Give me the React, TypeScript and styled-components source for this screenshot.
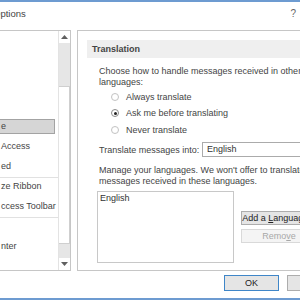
import { FC } from "react";
import styled, { createGlobalStyle } from "styled-components";

const GlobalStyle = createGlobalStyle`
    html, body {
        margin: 0;
        padding: 0;
        background: #ffffff;
        overflow: hidden;
    }
    body {
        font-family: "Liberation Sans", Arial, sans-serif;
        font-size: 9px;
        color: #444444;
    }
`;

// the list is scrolled, so only the tail of each label is in view
const navItems: { text: string; selected?: boolean; divider?: boolean }[] = [
    { text: "" },
    { text: "" },
    { text: "" },
    { text: "" },
    { text: "" },
    { text: "" },
    { text: "e", selected: true },
    { text: "Access" },
    { text: "ed", divider: true },
    { text: "ze Ribbon" },
    { text: "ccess Toolbar", divider: true },
    { text: "" },
    { text: "nter" },
];

const radios = [
    { label: "Always translate", checked: false },
    { label: "Ask me before translating", checked: true },
    { label: "Never translate", checked: false },
];

export const App: FC = () => {
    return (
        <Window>
            <GlobalStyle />
            <AccentLine />
            <TitleRow>
                <Title>Options</Title>
                <Help>?</Help>
            </TitleRow>

            <Body>
                <NavList>
                    <NavItems>
                        {navItems.map((item, i) => (
                            <NavRow key={i} $divider={item.divider}>
                                <NavLabel $selected={item.selected}>{item.text}</NavLabel>
                            </NavRow>
                        ))}
                    </NavItems>
                    <ScrollBar>
                        <ScrollArrow>
                            <svg width="7" height="4" viewBox="0 0 7 4">
                                <path d="M0 4 L3.5 0 L7 4 Z" fill="#606060" />
                            </svg>
                        </ScrollArrow>
                        <ScrollTrack>
                            <ScrollThumb />
                        </ScrollTrack>
                        <ScrollArrow>
                            <svg width="7" height="4" viewBox="0 0 7 4">
                                <path d="M0 0 L3.5 4 L7 0 Z" fill="#606060" />
                            </svg>
                        </ScrollArrow>
                    </ScrollBar>
                </NavList>

                <Panel>
                    <SectionHeader>Translation</SectionHeader>
                    <SectionBody>
                        <Paragraph>
                            Choose how to handle messages received in other languages:
                        </Paragraph>
                        <RadioGroup>
                            {radios.map((r) => (
                                <RadioRow key={r.label}>
                                    <RadioCircle $checked={r.checked} />
                                    <span>{r.label}</span>
                                </RadioRow>
                            ))}
                        </RadioGroup>
                        <SelectRow>
                            <SelectLabel>Translate messages into:</SelectLabel>
                            <Select>English</Select>
                        </SelectRow>
                        <Paragraph $gap={8}>
                            Manage your languages. We won't offer to translate messages
                            received in these languages.
                        </Paragraph>
                        <LanguagesRow>
                            <LanguageList>
                                <div>English</div>
                            </LanguageList>
                            <ButtonColumn>
                                <SideButton>
                                    Add a <u>L</u>anguage...
                                </SideButton>
                                <SideButton disabled>
                                    Remo<u>v</u>e
                                </SideButton>
                            </ButtonColumn>
                        </LanguagesRow>
                    </SectionBody>
                </Panel>
            </Body>

            <Footer>
                <DialogButton $primary>OK</DialogButton>
                <DialogButton>Cancel</DialogButton>
            </Footer>
            <AccentLine />
        </Window>
    );
};

export default App;

const Window = styled.div`
    width: 300px;
    height: 300px;
    overflow: hidden;
    display: flex;
    flex-direction: column;
    background: #ffffff;
`;

const AccentLine = styled.div`
    height: 2px;
    flex-shrink: 0;
    background: #6d9bd1;
`;

const TitleRow = styled.div`
    height: 22px;
    display: flex;
    align-items: center;
    justify-content: space-between;
    padding-right: 4px;
`;

const Title = styled.div`
    margin-left: -7px;
    font-size: 9.5px;
    color: #444444;
`;

const Help = styled.div`
    font-size: 10px;
    color: #666666;
`;

const Body = styled.div`
    margin-top: 6px;
    height: 241px;
    display: flex;
    gap: 6px;
`;

const NavList = styled.div`
    width: 72px;
    margin-left: -1px;
    flex-shrink: 0;
    box-sizing: border-box;
    border: 1px solid #c6c6c6;
    display: flex;
    overflow: hidden;
`;

const NavItems = styled.div`
    flex: 1;
    overflow: hidden;
`;

const NavRow = styled.div<{ $divider?: boolean }>`
    height: 21px;
    box-sizing: border-box;
    display: flex;
    align-items: center;
    padding-right: 3px;
    &:first-child {
        margin-top: -34.5px;
    }
    border-bottom: 1px solid ${(p) => (p.$divider ? "#e1e1e1" : "transparent")};
    margin-bottom: -1px;
`;

const NavLabel = styled.div<{ $selected?: boolean }>`
    flex: 1;
    height: 15px;
    line-height: 13px;
    box-sizing: border-box;
    white-space: nowrap;
    padding-left: 1px;
    margin-left: -1px;
    border: 1px solid ${(p) => (p.$selected ? "#a3a3a3" : "transparent")};
    background: ${(p) => (p.$selected ? "#d6d6d6" : "transparent")};
    color: #444444;
`;

const ScrollBar = styled.div`
    width: 11px;
    display: flex;
    flex-direction: column;
    border-left: 1px solid #e3e3e3;
`;

const ScrollArrow = styled.div`
    height: 12px;
    display: flex;
    align-items: center;
    justify-content: center;
    background: #ffffff;
`;

const ScrollTrack = styled.div`
    flex: 1;
    background: #e6e6e6;
    padding: 43px 0 14px;
    display: flex;
`;

const ScrollThumb = styled.div`
    flex: 1;
    background: #ffffff;
    border: 1px solid #cfcfcf;
    border-left: none;
`;

const Panel = styled.div`
    width: 240px;
    flex-shrink: 0;
    box-sizing: border-box;
    border: 1px solid #c6c6c6;
    padding: 9px 0 0 9px;
`;

const SectionHeader = styled.div`
    height: 18px;
    line-height: 18px;
    background: #efefef;
    padding-left: 5px;
    font-weight: bold;
    color: #444444;
`;

const SectionBody = styled.div`
    padding: 8px 0 0 12px;
    white-space: nowrap;
`;

const Paragraph = styled.div<{ $gap?: number }>`
    width: 230px;
    white-space: normal;
    line-height: 11px;
    margin-top: ${(p) => p.$gap ?? 0}px;
`;

const RadioGroup = styled.div`
    padding-left: 12px;
    margin-top: 0.5px;
`;

const RadioRow = styled.div`
    height: 16.5px;
    display: flex;
    align-items: center;
    gap: 7px;
`;

const RadioCircle = styled.span<{ $checked?: boolean }>`
    width: 8px;
    height: 8px;
    box-sizing: border-box;
    border-radius: 50%;
    border: 1px solid ${(p) => (p.$checked ? "#8a8a8a" : "#c2c2c2")};
    display: flex;
    align-items: center;
    justify-content: center;
    &::after {
        content: "";
        width: 3px;
        height: 3px;
        border-radius: 50%;
        background: ${(p) => (p.$checked ? "#222222" : "transparent")};
    }
`;

const SelectRow = styled.div`
    margin-top: 4px;
    height: 15px;
    display: flex;
    align-items: center;
`;

const SelectLabel = styled.span`
    width: 103px;
    flex-shrink: 0;
`;

const Select = styled.div`
    width: 120px;
    flex-shrink: 0;
    height: 15px;
    box-sizing: border-box;
    border: 1px solid #ababab;
    line-height: 13px;
    padding-left: 4px;
    color: #333333;
`;

const LanguagesRow = styled.div`
    margin-top: 3.5px;
    margin-left: -2px;
    display: flex;
    gap: 7px;
`;

const LanguageList = styled.div`
    width: 137px;
    flex-shrink: 0;
    height: 72px;
    box-sizing: border-box;
    border: 1px solid #c8c8c8;
    padding: 1px 2px;
    line-height: 11px;
    color: #333333;
`;

const ButtonColumn = styled.div`
    padding-top: 20px;
    display: flex;
    flex-direction: column;
    gap: 4px;
`;

const SideButton = styled.button`
    width: 76px;
    height: 14px;
    padding: 0;
    text-align: center;
    font-family: inherit;
    font-size: 9px;
    line-height: 12px;
    white-space: nowrap;
    border: 1px solid #adadad;
    background: #e5e5e5;
    color: #222222;
    &:disabled {
        border-color: #d9d9d9;
        background: #f4f4f4;
        color: #a8a8a8;
    }
`;

const Footer = styled.div`
    margin-top: 4px;
    display: flex;
    gap: 8px;
    flex: 1;
    align-items: flex-start;
    & > :first-child {
        margin-left: 224px;
    }
    & > :last-child {
        padding-left: 20px;
    }
`;

const DialogButton = styled.button<{ $primary?: boolean }>`
    width: 55px;
    min-width: 55px;
    flex-shrink: 0;
    height: 16px;
    padding: 0;
    display: inline-flex;
    align-items: center;
    justify-content: center;
    font-family: inherit;
    font-size: 9px;
    color: #222222;
    background: #e5e5e5;
    border: 1px solid ${(p) => (p.$primary ? "#3f86c8" : "#adadad")};
`;
